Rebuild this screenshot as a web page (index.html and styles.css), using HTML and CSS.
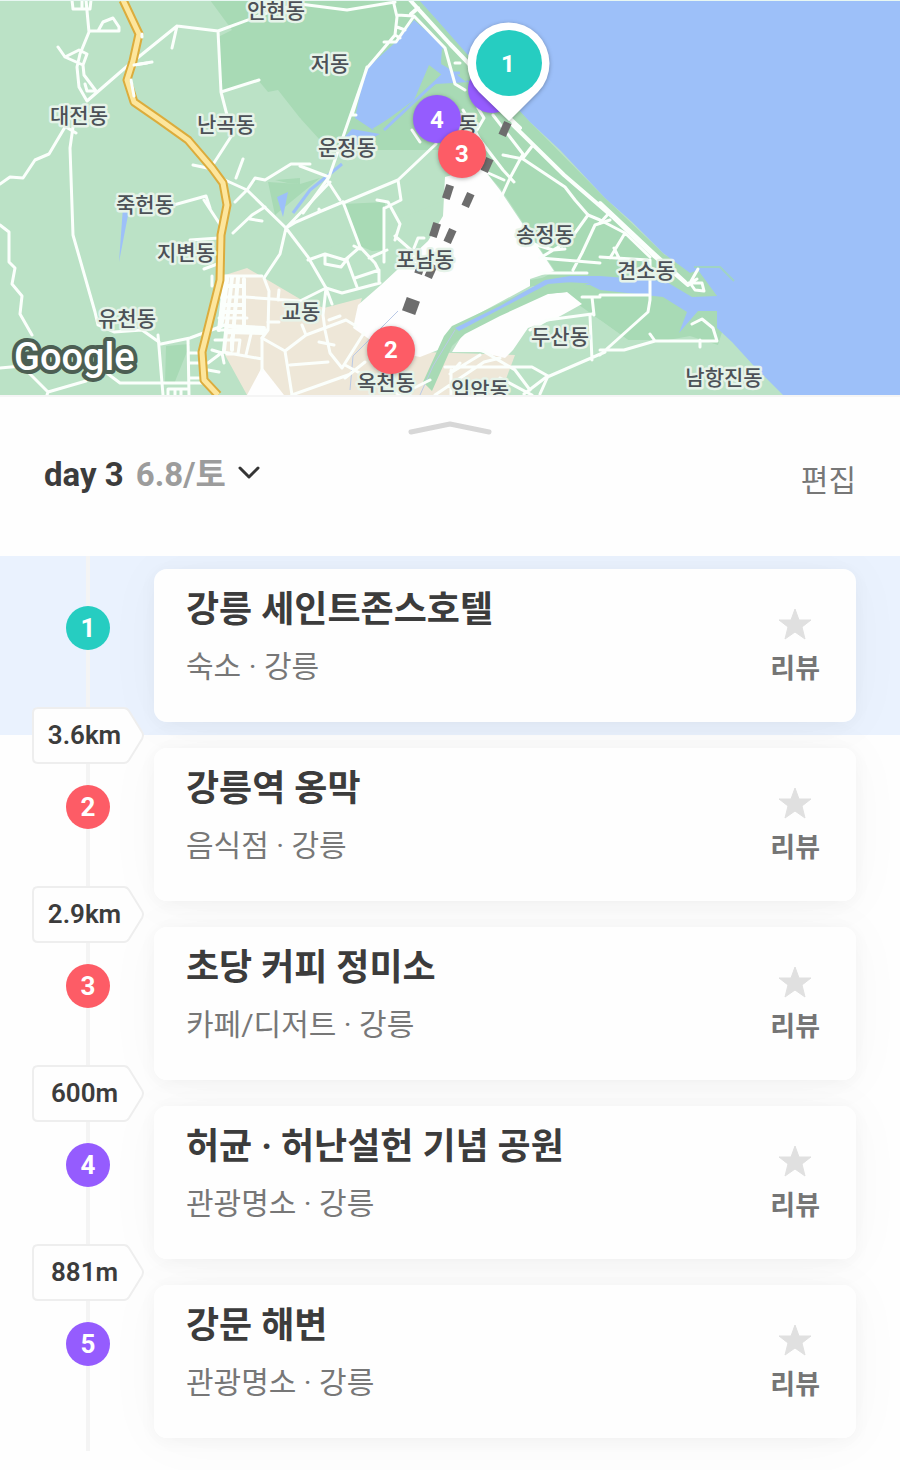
FILE: index.html
```html
<!DOCTYPE html>
<html lang="ko">
<head>
<meta charset="utf-8">
<meta name="viewport" content="width=device-width, initial-scale=1">
<title>day 3 여행 일정</title>
<link rel="stylesheet" href="styles.css">
</head>
<body>
<main class="trip">
  <section class="map" aria-label="강릉 지도">
    <svg class="map-art" viewBox="0 0 900 395" preserveAspectRatio="xMidYMid slice">
      <rect class="land" width="900" height="395"/>
      <!-- woodland -->
      <path class="wood" d="M210 0H425L445 25L530 122L605 198L665 255L735 290L718 345L690 336L668 340H628L600 320L565 295L530 285L555 271L500 188L482 168L440 150L375 150L362 151L300 184L250 182L300 178L320 150L300 118L278 90L268 92L258 80L220 92L218 37L232 30Z"/>
      <path class="land" d="M300 118L320 140L360 151H400L440 150L445 200L300 260L255 180H275L300 186Z"/>
      <path class="wood" d="M343 204L385 202L386 250L372 251L360 246ZM300 184L320 178L275 215L268 182ZM166 346L190 344L174 384H165Z"/>
      <path class="land" d="M600 320L628 340L600 352Z"/>
      <!-- sea, lake and streams -->
      <path class="water" d="M419 0L437 20L467 54L530 122L560 150L605 198L632 222L663 253L690 273L698 270L717 296L692 297L665 281L600 276H580L545 281L452 329L425 392H422L454 330L500 308L552 285H590L600 290L663 297L687 312L679 333L698 311H717V328L732 342L753 365L783 395H900V0Z"/>
      <path class="wood" d="M690 278L717 296L698 294L670 272Z"/>
      <path class="water" d="M414 20L446 48L441 64L460 75L470 82L436 84L373 130L355 118L365 70L397 41Z"/>
      <path class="wood" d="M442 48L470 74L466 82L441 62ZM429 65L442 75L412 105ZM372 129L410 106L386 129Z"/>
      <path class="water" d="M352 129L380 134L355 147L340 142ZM277 197L288 192L283 217ZM123 207L130 205L119 262Z"/>
      <path class="stream" d="M460 73L445 73L384 130M342 164L310 190L293 213"/>
      <path class="pier" d="M694 267H720L734 281"/>
      <!-- built-up area and blank tiles -->
      <path class="urban" d="M222 276L247 268L300 299L324 308L362 298L353 328L420 352L515 355L500 395H247L225 355Z"/>
      <path class="blank" d="M445 177L482 167L500 190L554 271L530 279V286L456 326L438 350L420 357L385 350L353 328L358 305L382 284L428 241L443 216Z"/>
      <path class="blank" d="M463 334L500 312L545 294L567 292L582 304L555 319L528 328L513 350L505 358L480 352L452 352Z"/>
      <path class="blank" d="M262 367L284 395H247Z"/>
      <path class="wood" d="M452 326L444 336L423 382L432 391L452 346L465 334L500 316L548 294L567 292L590 283L570 275L530 287V280L570 273L600 278V284L548 281Z"/>
      <path class="water" d="M455 328L500 306L545 280L570 276L600 276V288L584 281L548 284L506 306L459 331Z"/>
      <path class="stream thin" d="M455 330L433 366M398 311L353 356L350 390M433 366L420 395"/>
      <!-- minor roads -->
      <g class="road">
        <path d="M72 0L73 9H90L91 0M82 0L82 9M86 0L89 32L80 54M90 31H119V27L113 18L103 22L98 31M58 47L65 57L79 50L87 54L83 65L65 57M80 54L77 67L79 87L87 101M83 65L84 75L96 91L87 91L85 84M87 101L125 68L177 26L218 31L275 10L300 4M177 26L172 48M134 65L152 62M218 31L221 92L228 119L232 135L212 166M221 92L259 80M193 165L212 169M243 159L236 178M225 180L247 190L255 178L265 180L291 164H310M247 190L235 202M247 190L286 228M204 200L221 226"/>
        <path d="M68 122L49 154L35 160L23 178L10 177L0 184M66 127L76 133M73 127L70 148L73 235L95 312L98 325L114 332L142 330L159 342M170 206L206 196L210 208"/>
        <path d="M0 225L9 232V262L15 268L12 284L22 296L20 314L32 335M0 368L22 366L48 392L86 381M48 392L47 395M108 374L120 383H205M158 335L163 395M161 344L190 338L225 325L262 332M188 339L189 395M189 353H199M189 363H199M189 378H200M168 395V389H188M175 390V395M181 390V395"/>
        <path d="M222 276H262M220 297H245L300 301L326 288M219 318H247M218 330H267M215 340H240L238 354H227M223 352L262 359M251 334L246 355M228 276L222 325M212 276V286M204 269L220 263M190 240L219 238M220 354L208 363M208 370L219 372M212 350L222 353L224 363M279 290L278 300M262 338V370M268 322H279"/>
        <path d="M286 228L280 254L264 278L269 291L268 330L262 338L285 351L306 335L346 320L356 326M285 351L292 395M290 365L328 362M233 233L252 215L265 207M250 219L262 221M286 228L308 257L326 288L332 304M326 288L323 315L325 330L330 353L342 368L364 333M302 325L306 335M329 320L340 316M319 342L334 345M286 228L330 182M286 228L296 222L319 212V209M319 212L343 202"/>
        <path d="M308 260L325 254L345 260L360 247M325 254V264L341 267L348 258M347 260L357 287M343 202L360 247L375 263L379 271V283M326 288L342 293L380 283M355 278L379 270M369 258L387 250M354 246L360 249"/>
        <path d="M300 4L347 10L395 2M393 0L397 17L395 35L367 68L329 177L300 166M397 15L414 16L396 42H384M397 27L405 30M395 35L400 38M367 67L352 115H356M414 16L445 48L455 84L465 90M455 63H460M329 177L303 213M327 180L340 200M343 203L398 180L436 144M420 142L412 130M398 180L401 200L385 208L384 208L384 262M377 200L388 202L400 224L395 240M395 236L411 250M414 248L418 238H424M410 395L380 365M345 365L400 395M292 395L348 375"/>
        <path d="M463 110L480 140L503 170L514 182M493 115L523 154L510 178L500 200M486 172L504 180M503 155L523 159L565 187L575 200L588 215L570 240L540 258M523 158L533 145M570 240L562 246M540 258L600 263M573 270L582 253L595 225L610 220M486 99L478 108L484 118L477 130M530 243L553 250L565 249M539 273H587"/>
        <path d="M588 215L600 220L625 233L650 257M625 233L610 258M614 248L620 260M600 223L610 212M600 257L648 260M650 260V300L648 312L600 355M600 295H648M600 350L624 350L655 341L717 341L713 328L702 319L692 324M700 340V347M650 334L655 341M592 297L594 315M582 297H600M530 330L547 320L592 314M590 316L592 360M524 394L545 378L605 352"/>
        <path d="M445 367L532 367L548 376L540 394M483 351L515 370L530 390M452 372L480 355M410 390L430 380M451 370V395M460 363L450 374M435 395L484 362L500 358M500 378L532 395M345 378L365 362"/>
        <path d="M698 269L690 283L695 290L704 291L702 283L688 283M688 284L697 279"/>
      </g>
      <path class="road wide" d="M225 278L219 330M232 277L224 350M238 278L232 346M244 279V330M223 286H244M222 305H244M221 312H244M226 326L264 328M226 332L264 333M232 338V350"/>
      <!-- coast road -->
      <path class="road wide" d="M410 0L450 44L471 66M411 14L418 8M513 125L564 175L614 218L654 256L688 285M600 203L650 250L685 282M503 112L520 128"/>
      <!-- trunk road -->
      <path class="trunk-edge" d="M123 0L139 34L133 61L127 80L134 102L160 120L188 140L212 168L223 183L227 205L221 235L220 280L202 352L204 380L218 395"/>
      <path class="trunk" d="M123 0L139 34L133 61L127 80L134 102L160 120L188 140L212 168L223 183L227 205L221 235L220 280L202 352L204 380L218 395"/>
      <path class="road" d="M142 34V37M134 65L147 63M131 80L134 96"/>
      <!-- route -->
      <g class="route">
        <rect x="501" y="122" width="8" height="14" transform="rotate(24 505 129)"/>
        <rect x="483" y="158" width="8" height="14" transform="rotate(24 487 165)"/>
        <rect x="464" y="193" width="8" height="14" transform="rotate(24 468 200)"/>
        <rect x="444" y="185" width="8" height="14" transform="rotate(18 448 192)"/>
        <rect x="446" y="229" width="8" height="14" transform="rotate(24 450 236)"/>
        <rect x="431" y="223" width="8" height="14" transform="rotate(18 435 230)"/>
        <rect x="427" y="264" width="8" height="14" transform="rotate(24 431 271)"/>
        <rect x="416" y="262" width="8" height="12" transform="rotate(18 420 268)"/>
        <rect x="404" y="299" width="14" height="14" transform="rotate(20 411 306)"/>
      </g>
      <g class="place">
        <text x="276" y="18">안현동</text><text x="330" y="71">저동</text>
        <text x="79" y="123">대전동</text><text x="226" y="132">난곡동</text>
        <text x="347" y="155">운정동</text><text x="145" y="212">죽헌동</text>
        <text x="186" y="260">지변동</text><text x="127" y="326">유천동</text>
        <text x="301" y="319">교동</text><text x="425" y="267">포남동</text>
        <text x="545" y="242">송정동</text><text x="646" y="278">견소동</text>
        <text x="560" y="344">두산동</text><text x="724" y="385">남항진동</text>
        <text x="386" y="390">옥천동</text><text x="480" y="397">입암동</text>
        <text x="468" y="132">동</text>
      </g>
      <text class="google" x="14" y="370">Google</text>
      <g class="pins">
        <circle class="shade violet" cx="492" cy="89" r="24"/>
        <circle class="shade violet" cx="437" cy="119" r="24"/><text x="437" y="128">4</text>
        <circle class="shade coral" cx="462" cy="154" r="24"/><text x="462" y="162">3</text>
        <circle class="shade coral" cx="391" cy="350" r="24"/><text x="391" y="358">2</text>
        <path class="shade pin" d="M509 121L479 92A41 41 0 1 1 538 92Z"/>
        <circle class="teal" cx="509" cy="63" r="33"/><text x="508" y="72">1</text>
      </g>
      <path class="top-line" d="M0 0H900"/>
    </svg>
  </section>

  <header class="day-head">
    <button class="handle" type="button" aria-label="일정 펼치기">
      <svg viewBox="0 0 84 14"><path d="M3 11L42 3L81 11"/></svg>
    </button>
    <div class="day-bar">
      <button class="day" type="button" aria-haspopup="listbox">
        <span>day 3</span><span class="date">6.8/토</span>
        <svg viewBox="0 0 22 18"><path d="M2 2L11 11L20 2"/></svg>
      </button>
      <button class="edit" type="button">편집</button>
    </div>
  </header>

  <ol class="stops">
    <li class="stop active">
      <div class="rail"><span class="num teal">1</span></div>
      <article class="card">
        <div class="info"><h2>강릉 세인트존스호텔</h2><p>숙소 · 강릉</p></div>
        <button class="review" type="button"><svg viewBox="0 0 34 32"><path d="M17 1L21 12H33L24 19L27 31L17 24L7 31L10 19L1 12H13Z"/></svg>리뷰</button>
      </article>
      <div class="leg"><svg viewBox="0 0 112 57"><path d="M6 1H92Q95 1 97 4L110 25Q112 28 110 32L97 53Q95 56 92 56H6Q1 56 1 51V6Q1 1 6 1Z"/></svg><span>3.6km</span></div>
    </li>
    <li class="stop">
      <div class="rail"><span class="num coral">2</span></div>
      <article class="card">
        <div class="info"><h2>강릉역 옹막</h2><p>음식점 · 강릉</p></div>
        <button class="review" type="button"><svg viewBox="0 0 34 32"><path d="M17 1L21 12H33L24 19L27 31L17 24L7 31L10 19L1 12H13Z"/></svg>리뷰</button>
      </article>
      <div class="leg"><svg viewBox="0 0 112 57"><path d="M6 1H92Q95 1 97 4L110 25Q112 28 110 32L97 53Q95 56 92 56H6Q1 56 1 51V6Q1 1 6 1Z"/></svg><span>2.9km</span></div>
    </li>
    <li class="stop">
      <div class="rail"><span class="num coral">3</span></div>
      <article class="card">
        <div class="info"><h2>초당 커피 정미소</h2><p>카페/디저트 · 강릉</p></div>
        <button class="review" type="button"><svg viewBox="0 0 34 32"><path d="M17 1L21 12H33L24 19L27 31L17 24L7 31L10 19L1 12H13Z"/></svg>리뷰</button>
      </article>
      <div class="leg"><svg viewBox="0 0 112 57"><path d="M6 1H92Q95 1 97 4L110 25Q112 28 110 32L97 53Q95 56 92 56H6Q1 56 1 51V6Q1 1 6 1Z"/></svg><span>600m</span></div>
    </li>
    <li class="stop">
      <div class="rail"><span class="num violet">4</span></div>
      <article class="card">
        <div class="info"><h2>허균 · 허난설헌 기념 공원</h2><p>관광명소 · 강릉</p></div>
        <button class="review" type="button"><svg viewBox="0 0 34 32"><path d="M17 1L21 12H33L24 19L27 31L17 24L7 31L10 19L1 12H13Z"/></svg>리뷰</button>
      </article>
      <div class="leg"><svg viewBox="0 0 112 57"><path d="M6 1H92Q95 1 97 4L110 25Q112 28 110 32L97 53Q95 56 92 56H6Q1 56 1 51V6Q1 1 6 1Z"/></svg><span>881m</span></div>
    </li>
    <li class="stop">
      <div class="rail"><span class="num violet">5</span></div>
      <article class="card">
        <div class="info"><h2>강문 해변</h2><p>관광명소 · 강릉</p></div>
        <button class="review" type="button"><svg viewBox="0 0 34 32"><path d="M17 1L21 12H33L24 19L27 31L17 24L7 31L10 19L1 12H13Z"/></svg>리뷰</button>
      </article>
    </li>
  </ol>
</main>
</body>
</html>
```
FILE: styles.css
```css
* { box-sizing: border-box; }
body {
  margin: 0;
  background: #fefefe;
  color: #3c3c3c;
  font-family: Roboto, "Noto Sans CJK KR", sans-serif;
}
button {
  margin: 0;
  padding: 0;
  border: 0;
  background: none;
  color: inherit;
  font: inherit;
  cursor: pointer;
}
svg { display: block; }

/* map */
.map { border-bottom: 2px solid #f5f5f5; }
.map-art { width: 100%; height: 395px; }
.land { fill: #bbe2c6; }
.wood { fill: #a8dab5; }
.water { fill: #9dc0f9; }
.urban { fill: #eee7d8; }
.blank { fill: #fefefe; }
.stream { fill: none; stroke: #9dc0f9; stroke-width: 3; }
.stream.thin { stroke: #b9c9e6; stroke-width: 1; }
.pier { fill: none; stroke: #a0d3c4; stroke-width: 2; }
.road { fill: none; stroke: #fbfffc; stroke-width: 3; stroke-linecap: round; stroke-linejoin: round; }
.road.wide { stroke-width: 4; }
.trunk-edge { fill: none; stroke: #dcac3c; stroke-width: 9; stroke-linejoin: round; }
.trunk { fill: none; stroke: #fde69d; stroke-width: 5; stroke-linejoin: round; }
.route { fill: #6d6d6d; }
.place text {
  font: 500 21px "Noto Sans CJK KR", sans-serif;
  text-anchor: middle;
  fill: #4c5157;
  stroke: #e6f3e9;
  stroke-width: 5px;
  stroke-linejoin: round;
  paint-order: stroke;
}
.google {
  font: 500 38px Roboto, sans-serif;
  fill: #fff;
  stroke: #4c5f53;
  stroke-width: 8px;
  stroke-linejoin: round;
  paint-order: stroke;
}
.pins text { font: 700 24px Roboto, sans-serif; text-anchor: middle; fill: #fff; }
.shade { filter: drop-shadow(0 1px 2px rgba(0, 0, 0, .3)); }
.pin { fill: #fff; }
circle.teal { fill: #26cdc1; }
circle.coral { fill: #fd5c66; }
circle.violet { fill: #955cfe; }
.top-line { stroke: #e8f7f2; stroke-width: 2; }

/* day header */
.day-head { height: 159px; padding-top: 24px; }
.handle { display: block; width: 84px; margin: 0 auto; }
.handle path { fill: none; stroke: #d7d7d7; stroke-width: 5; stroke-linecap: round; stroke-linejoin: round; }
.day-bar { display: flex; justify-content: space-between; padding: 20px 44px 0; }
.day { display: flex; align-items: center; gap: 12px; height: 40px; font-size: 33px; line-height: 40px; font-weight: 700; }
.date { color: #9c9c9c; }
.day svg { width: 22px; }
.day path { fill: none; stroke: #353535; stroke-width: 3; stroke-linecap: round; stroke-linejoin: round; }
.edit { height: 52px; color: #777; font-size: 30px; line-height: 52px; }

/* itinerary */
.stops { margin: 0; padding: 0 0 19px; list-style: none; isolation: isolate; overflow: hidden; }
.stop { position: relative; display: flex; padding-right: 44px; }
.active::before { content: ""; position: absolute; inset: 0; z-index: -2; background: #eaf2fe; }
.rail {
  flex: 0 0 154px;
  padding: 50px 0 0 66px;
  background: linear-gradient(#f4f4f4, #f4f4f4) 86px 0 / 4px 100% no-repeat;
}
.num {
  display: block;
  width: 44px;
  height: 44px;
  border-radius: 50%;
  color: #fff;
  font-size: 26px;
  line-height: 44px;
  font-weight: 700;
  text-align: center;
}
.num.teal { background: #26cdc1; }
.num.coral { background: #fd5c66; }
.num.violet { background: #955cfe; }
.card {
  position: relative;
  display: flex;
  flex: 1;
  justify-content: space-between;
  min-height: 153px;
  margin: 13px 0;
  padding: 15px 36px 13px 32px;
  border-radius: 13px;
  background: #fefefe;
}
.card::before {
  content: "";
  position: absolute;
  inset: 0;
  z-index: -1;
  border-radius: 13px;
  box-shadow: 0 2px 60px rgba(0, 0, 0, .03), 0 3px 18px rgba(0, 0, 0, .04);
}
h2 { margin: 0; font-size: 36px; line-height: 52px; font-weight: 700; }
.info p { margin: 9px 0 0; color: #777; font-size: 30px; line-height: 44px; }
.review {
  display: flex;
  flex-direction: column;
  align-items: center;
  gap: 9px;
  align-self: flex-start;
  padding-top: 24px;
  color: #757575;
  font-size: 27px;
  line-height: 40px;
  font-weight: 700;
}
.review svg { width: 34px; height: 32px; }
.review path { fill: #e0e0e0; stroke: #e0e0e0; stroke-width: 1; stroke-linejoin: round; }
.leg {
  position: absolute;
  bottom: -29px;
  left: 32px;
  z-index: 1;
  display: grid;
  width: 112px;
  height: 57px;
}
.leg > * { grid-area: 1 / 1; }
.leg path { fill: #fefefe; stroke: #eee; stroke-width: 2; }
.leg span { padding-right: 7px; font-size: 26px; line-height: 57px; font-weight: 600; text-align: center; }
```
